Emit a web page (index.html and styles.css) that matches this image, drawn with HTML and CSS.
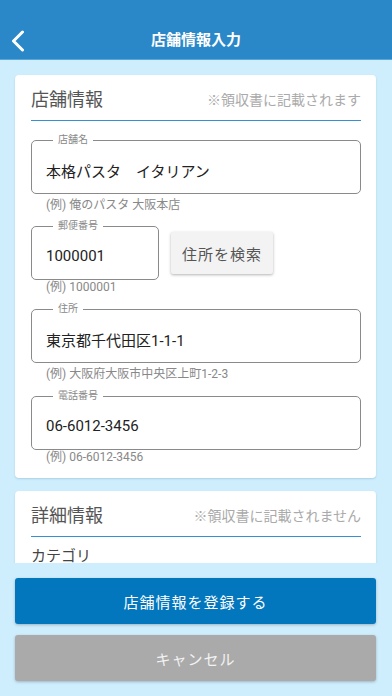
FILE: index.html
```html
<!DOCTYPE html>
<html>
<head>
    <title>店舗情報入力</title>
    <link rel="stylesheet" href="styles.css">
</head>
<body>
    <div class="app">
        <div class="header">
            <a class="back" href="#">
                <svg width="14" height="22" viewBox="0 0 14 22">
                    <polyline points="11.5,2 2.5,11 11.5,20" fill="none" stroke="#fff" stroke-width="3" stroke-linecap="round" stroke-linejoin="round"/>
                </svg>
            </a>
            <div class="title">店舗情報入力</div>
        </div>

        <div class="content">
            <div class="card">
                <div class="card-head">
                    <h2>店舗情報</h2>
                    <span class="note">※領収書に記載されます</span>
                </div>

                <fieldset class="field first">
                    <legend>店舗名</legend>
                    <input type="text" value="本格パスタ　イタリアン">
                </fieldset>
                <div class="hint">(例) 俺のパスタ 大阪本店</div>

                <div class="zip-row">
                    <fieldset class="field zip">
                        <legend>郵便番号</legend>
                        <input type="text" value="1000001">
                    </fieldset>
                    <button type="button" class="search-btn">住所を検索</button>
                </div>
                <div class="hint tight">(例) 1000001</div>

                <fieldset class="field">
                    <legend>住所</legend>
                    <input type="text" value="東京都千代田区1-1-1">
                </fieldset>
                <div class="hint">(例) 大阪府大阪市中央区上町1-2-3</div>

                <fieldset class="field">
                    <legend>電話番号</legend>
                    <input type="tel" value="06-6012-3456">
                </fieldset>
                <div class="hint tight">(例) 06-6012-3456</div>
            </div>

            <div class="card">
                <div class="card-head">
                    <h2>詳細情報</h2>
                    <span class="note">※領収書に記載されません</span>
                </div>
                <div class="sub-label">カテゴリ</div>
            </div>
        </div>

        <div class="footer">
            <button type="button" class="btn btn-primary">店舗情報を登録する</button>
            <button type="button" class="btn btn-cancel">キャンセル</button>
        </div>
    </div>
</body>
</html>
```

FILE: styles.css
```css
* {
    box-sizing: border-box;
}

body {
    margin: 0;
    font-family: Roboto, "Noto Sans CJK JP", sans-serif;
    background-color: #cfeefd;
}

.app {
    height: 100vh;
    display: flex;
    flex-direction: column;
}

.header {
    position: relative;
    height: 60px;
    padding-top: 21px;
    background-color: #2a88c8;
    border-bottom: 1px solid #5aa6d8;
    display: flex;
    align-items: center;
    justify-content: center;
}

.back {
    position: absolute;
    left: 11px;
    top: 30px;
    display: block;
    line-height: 0;
}

.title {
    color: #fff;
    font-size: 15px;
    font-weight: bold;
    line-height: 20px;
}

.content {
    flex: 1;
    overflow: hidden;
    padding: 15px 16px 0 15px;
}

.card {
    background-color: #fff;
    border-radius: 4px;
    padding: 0 15px 13px 16px;
    margin-bottom: 13px;
    box-shadow: 0 1px 2px rgba(60, 120, 160, 0.25);
}

.card-head {
    display: flex;
    align-items: center;
    justify-content: space-between;
    padding: 12px 0 7px;
    border-bottom: 1px solid #3a8fd0;
}

.card-head h2 {
    margin: 0;
    font-size: 18px;
    font-weight: normal;
    line-height: 26px;
    color: #555;
}

.note {
    font-size: 14px;
    color: #aaa;
    line-height: 26px;
}

.field {
    margin: 8px 0 0;
    padding: 14px 14px 13px 14px;
    border: 1px solid #8a8a8a;
    border-radius: 5px;
    min-width: 0;
}

.field.first {
    margin-top: 13px;
}

.field legend {
    margin-left: 7px;
    padding: 0 5px;
    font-size: 10px;
    line-height: 12px;
    color: #888;
}

.field input {
    display: block;
    width: 100%;
    height: 20px;
    padding: 0;
    border: none;
    outline: none;
    font-family: Roboto, "Noto Sans CJK JP", sans-serif;
    font-size: 15px;
    color: #222;
    background: transparent;
}

.hint {
    margin-top: 3px;
    padding-left: 15px;
    font-size: 12px;
    line-height: 16px;
    color: #888;
}

.hint.tight {
    margin-top: -1px;
}

.zip-row {
    display: flex;
    align-items: flex-start;
    margin-top: 7px;
}

.zip-row .field {
    margin-top: 0;
}

.field.zip {
    width: 128px;
    flex: none;
}

.search-btn {
    margin: 12px 0 0 12px;
    width: 102px;
    height: 42px;
    border: none;
    border-radius: 2px;
    background-color: #f3f3f3;
    box-shadow: 0 1px 3px rgba(0, 0, 0, 0.3);
    font-family: Roboto, "Noto Sans CJK JP", sans-serif;
    font-size: 15px;
    letter-spacing: 1px;
    color: #555;
}

.sub-label {
    margin-top: 11px;
    font-size: 15px;
    line-height: 16px;
    color: #444;
}

.footer {
    display: flex;
    flex-direction: column;
    gap: 11px;
    padding: 15px 16px 15px 15px;
}

.btn {
    height: 46px;
    border: none;
    border-radius: 3px;
    font-family: Roboto, "Noto Sans CJK JP", sans-serif;
    font-size: 15px;
    letter-spacing: 1px;
    box-shadow: 0 1px 3px rgba(0, 0, 0, 0.25);
}

.btn-primary {
    background-color: #0277be;
    color: #fff;
}

.btn-cancel {
    background-color: #aaaaaa;
    color: #f2f2f2;
}
```
